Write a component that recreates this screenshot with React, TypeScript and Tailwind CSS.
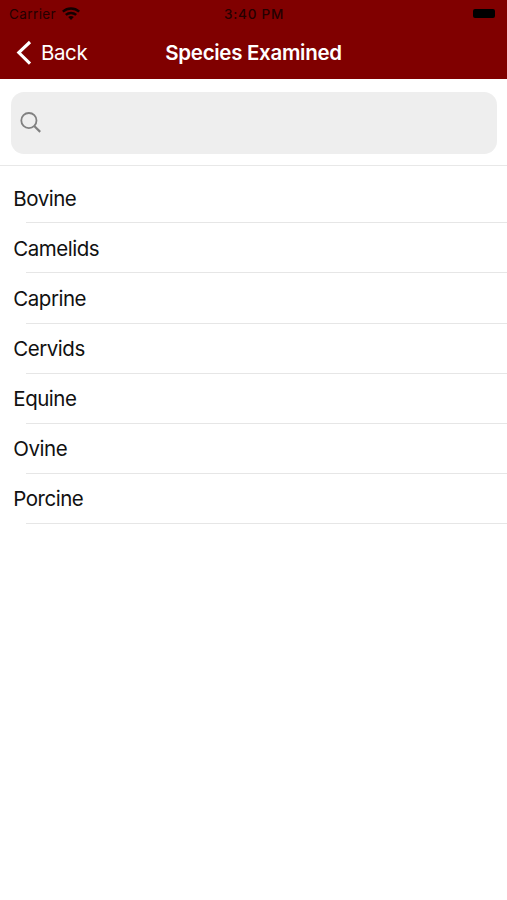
const species = ['Bovine', 'Camelids', 'Caprine', 'Cervids', 'Equine', 'Ovine', 'Porcine'];

function WifiIcon() {
  return (
    <svg className="h-[13px] w-[18px]" viewBox="0 0 18 13" fill="none" stroke="#120000" strokeWidth="2.5">
      <path d="M.8 4.6C5.6.4 12.4.4 17.2 4.6" />
      <path d="M3.8 7.9c3-2.7 7.4-2.7 10.4 0" />
      <path d="M6.2 10c1.6-1.4 4-1.4 5.6 0L9 12.9Z" fill="#120000" stroke="none" />
    </svg>
  );
}

function StatusBar() {
  return (
    <div className="grid h-[27px] grid-cols-[1fr_auto_1fr] items-center text-[13.5px] leading-none text-[#240000]">
      <div className="flex items-center gap-[6px] pl-[9px]">
        <span className="pt-[2px] tracking-[0.4px]">Carrier</span>
        <WifiIcon />
      </div>
      <span className="pt-[2px] pl-px font-medium tracking-[0.75px] whitespace-nowrap">3:40 PM</span>
      <div className="mr-[12px] h-[9px] w-[22px] justify-self-end rounded-[2px] bg-black" />
    </div>
  );
}

function NavBar() {
  return (
    <div className="grid h-[52px] grid-cols-[1fr_auto_1fr] items-center text-white">
      <button className="flex items-center gap-[9px] pl-[16px] text-[20.5px] leading-none tracking-[-0.4px]">
        <svg className="h-[26px] w-[16px]" viewBox="0 0 16 26" fill="none" stroke="currentColor" strokeWidth="3.1">
          <path d="M14 2 2.8 12.6 14 23.6" />
        </svg>
        <span>Back</span>
      </button>
      <h1 className="text-[20.5px] leading-none font-semibold tracking-[-0.3px]">Species Examined</h1>
    </div>
  );
}

export default function App() {
  return (
    <div className="min-h-screen w-full bg-white font-['Inter','Liberation_Sans',sans-serif]">
      <header className="h-[79px] bg-[#800000]">
        <StatusBar />
        <NavBar />
      </header>
      <div className="h-[87px] border-b border-[#e8e8e8] pt-[12.5px] pr-[10px] pl-[11px]">
        <div className="flex h-[62px] items-center rounded-[13px] bg-[#eeeeee] pl-[9px]">
          <svg className="h-[22px] w-[22px]" viewBox="0 0 22 22" fill="none" stroke="#808080" strokeWidth="1.8">
            <circle cx="8.9" cy="8.6" r="7.6" />
            <path d="m14.2 14 6 5.9" strokeWidth="2.2" />
          </svg>
        </div>
      </div>
      <ul className="pt-[7.3px]">
        {species.map((name) => (
          <li key={name} className="flex h-[50.1px] flex-col text-[20.5px] leading-none tracking-[-0.48px] text-[#111111]">
            <span className="flex flex-1 items-center pt-[2px] pl-[13.3px]">{name}</span>
            <span className="ml-[26px] h-px bg-[#e6e6e6]" />
          </li>
        ))}
      </ul>
    </div>
  );
}
